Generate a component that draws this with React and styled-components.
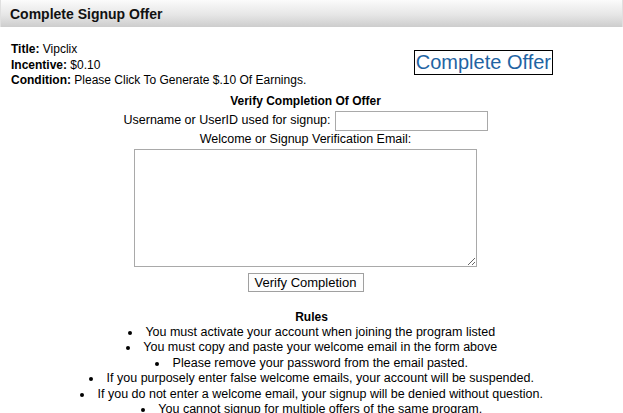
import React from 'react';
import styled, { createGlobalStyle } from 'styled-components';

const GlobalStyle = createGlobalStyle`
  html, body {
    margin: 0;
    padding: 0;
    background: #ffffff;
  }
  body {
    font-family: "Liberation Sans", Arial, sans-serif;
    font-size: 12px;
    color: #000;
  }
`;

const Page = styled.div`
  width: 623px;
`;

const Header = styled.div`
  height: 27px;
  box-sizing: border-box;
  padding-left: 9px;
  display: flex;
  align-items: center;
  font-size: 14px;
  font-weight: bold;
  color: #111;
  background: linear-gradient(to bottom, #fbfbfb 0%, #e6e6e6 55%, #cdcdcd 100%);
  border-left: 1px solid #e0e0e0;
  border-right: 1px solid #e0e0e0;
`;

const OfferRow = styled.div`
  display: flex;
  justify-content: space-between;
  align-items: flex-start;
  margin-top: 15px;
  padding: 0 70px 0 11px;
`;

const Info = styled.div`
  line-height: 15.5px;
`;

const Label = styled.b`
  font-weight: bold;
`;

const CompleteButton = styled.a`
  margin-top: 8px;
  display: block;
  border: 1px solid #000;
  padding: 0 1px;
  font-size: 20px;
  line-height: 23px;
  color: #1f64a3;
  text-decoration: none;
  cursor: pointer;
`;

const Verify = styled.form`
  margin-top: 5px;
  padding-right: 12px;
  display: flex;
  flex-direction: column;
  align-items: center;
  line-height: 15px;
`;

const Heading = styled.div`
  font-weight: bold;
`;

const Field = styled.div`
  display: flex;
  align-items: center;
  gap: 4px;
  margin-top: 2px;
  font-size: 12.5px;
`;

const TextInput = styled.input`
  width: 153px;
  height: 20px;
  box-sizing: border-box;
  border: 1px solid #a9a9a9;
  padding: 1px 3px;
  font-family: inherit;
  font-size: 12px;
`;

const Caption = styled.div`
  margin-top: 1px;
  font-size: 12.5px;
`;

const Area = styled.textarea`
  width: 343px;
  height: 118px;
  box-sizing: border-box;
  margin-top: 2px;
  border: 1px solid #a9a9a9;
  font-family: inherit;
  font-size: 12px;
`;

const SubmitButton = styled.button`
  margin-top: 6px;
  height: 19px;
  width: 116px;
  padding: 0;
  border: 1px solid #a0a0a0;
  background: #fdfdfd;
  font-family: "Liberation Sans", Arial, sans-serif;
  font-size: 13px;
  color: #000;
`;

const Rules = styled.div`
  margin-top: 18px;
  text-align: center;
  line-height: 15px;
`;

const RuleList = styled.ul`
  margin: 0;
  padding: 0;
  list-style: disc inside;
  font-size: 12.5px;
  line-height: 15.5px;
`;

const Rule = styled.li`
  margin: 0;
`;

const rules = [
  'You must activate your account when joining the program listed',
  'You must copy and paste your welcome email in the form above',
  'Please remove your password from the email pasted.',
  'If you purposely enter false welcome emails, your account will be suspended.',
  'If you do not enter a welcome email, your signup will be denied without question.',
  'You cannot signup for multiple offers of the same program.',
];

const App = () => {
  return (
    <Page>
      <GlobalStyle />
      <Header>Complete Signup Offer</Header>
      <OfferRow>
        <Info>
          <div><Label>Title:</Label> Vipclix</div>
          <div><Label>Incentive:</Label> $0.10</div>
          <div><Label>Condition:</Label> Please Click To Generate $.10 Of Earnings.</div>
        </Info>
        <CompleteButton>Complete Offer</CompleteButton>
      </OfferRow>
      <Verify onSubmit={(e) => e.preventDefault()}>
        <Heading>Verify Completion Of Offer</Heading>
        <Field>
          <span>Username or UserID used for signup:</span>
          <TextInput type="text" />
        </Field>
        <Caption>Welcome or Signup Verification Email:</Caption>
        <Area />
        <SubmitButton type="submit">Verify Completion</SubmitButton>
      </Verify>
      <Rules>
        <Heading>Rules</Heading>
        <RuleList>
          {rules.map((r) => (
            <Rule key={r}>{r}</Rule>
          ))}
        </RuleList>
      </Rules>
    </Page>
  );
};

export default App;
